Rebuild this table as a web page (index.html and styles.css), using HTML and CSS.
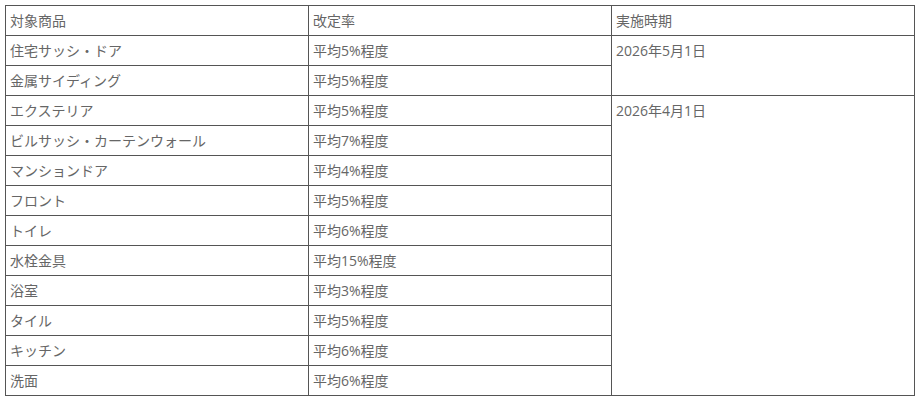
FILE: index.html
```html
<!DOCTYPE html>
<html lang="ja">
<head>
<meta charset="utf-8">
<link rel="stylesheet" href="styles.css">
</head>
<body>
<table class="price-table">
  <tr><td>対象商品</td><td>改定率</td><td>実施時期</td></tr>
  <tr><td>住宅サッシ・ドア</td><td>平均5%程度</td><td rowspan="2">2026年5月1日</td></tr>
  <tr><td>金属サイディング</td><td>平均5%程度</td></tr>
  <tr><td>エクステリア</td><td>平均5%程度</td><td rowspan="10">2026年4月1日</td></tr>
  <tr><td>ビルサッシ・カーテンウォール</td><td>平均7%程度</td></tr>
  <tr><td>マンションドア</td><td>平均4%程度</td></tr>
  <tr><td>フロント</td><td>平均5%程度</td></tr>
  <tr><td>トイレ</td><td>平均6%程度</td></tr>
  <tr><td>水栓金具</td><td>平均15%程度</td></tr>
  <tr><td>浴室</td><td>平均3%程度</td></tr>
  <tr><td>タイル</td><td>平均5%程度</td></tr>
  <tr><td>キッチン</td><td>平均6%程度</td></tr>
  <tr><td>洗面</td><td>平均6%程度</td></tr>
</table>
</body>
</html>
```
FILE: styles.css
```css
html, body {
  margin: 0;
  background: #fff;
}
body {
  padding: 5px;
  font-family: "Open Sans", "Noto Sans CJK JP", sans-serif;
  font-size: 14px;
  color: #666;
}
.price-table {
  border-collapse: collapse;
  width: 910px;
  table-layout: fixed;
}
.price-table td {
  border: 1px solid #555;
  padding: 4px 4px;
  line-height: 21px;
  vertical-align: top;
  text-align: left;
}
```
